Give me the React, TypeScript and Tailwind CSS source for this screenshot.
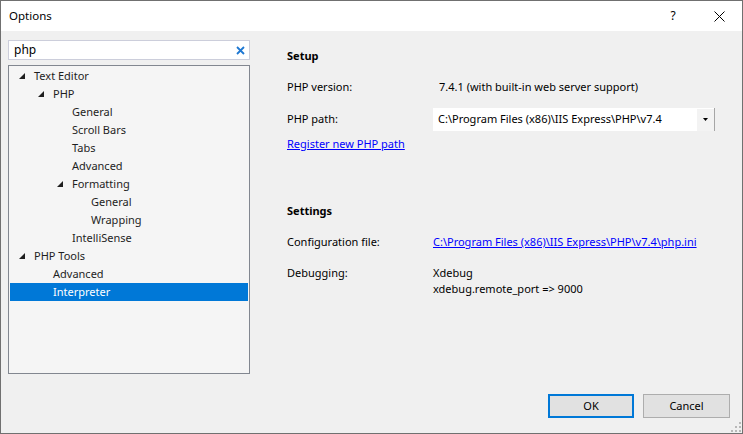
import React from 'react'

type Node = { label: string; level: number; open?: boolean; selected?: boolean }

const tree: Node[] = [
    { label: 'Text Editor', level: 0, open: true },
    { label: 'PHP', level: 1, open: true },
    { label: 'General', level: 2 },
    { label: 'Scroll Bars', level: 2 },
    { label: 'Tabs', level: 2 },
    { label: 'Advanced', level: 2 },
    { label: 'Formatting', level: 2, open: true },
    { label: 'General', level: 3 },
    { label: 'Wrapping', level: 3 },
    { label: 'IntelliSense', level: 2 },
    { label: 'PHP Tools', level: 0, open: true },
    { label: 'Advanced', level: 1 },
    { label: 'Interpreter', level: 1, selected: true },
]

const font = { fontFamily: '"Segoe UI", "Noto Sans", "Open Sans", sans-serif' }

function TreeRow({ node }: { node: Node }) {
    return (
        <div
            className={`flex items-center h-[18px] ${node.selected ? 'bg-[#0078d7] text-white' : 'text-[#1e1e1e]'}`}
            style={{ paddingLeft: node.level * 19 }}
        >
            <div className="w-[24px] h-[18px] flex items-center">
                {node.open && (
                    <svg width="6" height="6" viewBox="0 0 6 6" className="ml-[9px]">
                        <polygon points="6,0 6,6 0,6" fill="#1e1e1e" />
                    </svg>
                )}
            </div>
            <span className="leading-[18px]">{node.label}</span>
        </div>
    )
}

export default function App() {
    return (
        <div className="w-[743px] h-[434px] border border-[#707070] flex flex-col text-[11px] text-black overflow-hidden whitespace-nowrap" style={font}>
            {/* Title bar */}
            <div className="h-[30px] bg-white flex items-center">
                <span className="pl-[8px] flex-1 text-[11.5px]">Options</span>
                <div className="w-[46px] h-[30px] flex items-center justify-center text-[12px]">?</div>
                <div className="w-[46px] h-[30px] flex items-center justify-center">
                    <svg width="11" height="11" viewBox="0 0 11 11">
                        <path d="M0.5 0.5 L10.5 10.5 M10.5 0.5 L0.5 10.5" stroke="#000" strokeWidth="1" />
                    </svg>
                </div>
            </div>

            {/* Body */}
            <div className="flex-1 bg-[#f0f0f0] flex flex-col relative">
                <div className="flex flex-1">
                    {/* Left column */}
                    <div className="w-[242px] ml-[7px] mt-[9px] flex flex-col">
                        <div className="h-[20px] bg-white border border-[#cccedb] flex items-center pl-[5px] pr-[4px]">
                            <span className="flex-1 leading-[18px] text-[12px]">php</span>
                            <svg width="9" height="9" viewBox="0 0 9 9">
                                <path d="M1 1 L8 8 M8 1 L1 8" stroke="#1e78d2" strokeWidth="1.8" />
                            </svg>
                        </div>
                        <div className="mt-[5px] h-[309px] bg-[#f5f5f5] border border-[#828790] px-px pt-px">
                            {tree.map((n, i) => (
                                <TreeRow key={i} node={n} />
                            ))}
                        </div>
                    </div>

                    {/* Right column */}
                    <div className="ml-[37px] pt-[17px] flex-1 pr-[27px]">
                        <div className="font-bold leading-[16px]">Setup</div>

                        <div className="flex mt-[15px] leading-[16px]">
                            <span className="w-[146px]">PHP version:</span>
                            <span className="ml-[6px]">7.4.1 (with built-in web server support)</span>
                        </div>

                        <div className="flex items-center mt-[13px]">
                            <span className="w-[146px]">PHP path:</span>
                            <div className="flex-1 h-[23px] bg-white border-r border-[#a6a6a6] flex items-center">
                                <span className="flex-1 pl-[5px]">C:\Program Files (x86)\IIS Express\PHP\v7.4</span>
                                <div className="w-[17px] h-[22px] bg-[#f3f3f3] flex items-center justify-center">
                                    <svg width="5" height="3" viewBox="0 0 5 3">
                                        <polygon points="0,0 5,0 2.5,3" fill="#000" />
                                    </svg>
                                </div>
                            </div>
                        </div>

                        <div className="mt-[5px] leading-[16px]">
                            <span className="text-[#0000ff] underline">Register new PHP path</span>
                        </div>

                        <div className="font-bold leading-[16px] mt-[51px]">Settings</div>

                        <div className="flex mt-[15px] leading-[16px]">
                            <span className="w-[146px]">Configuration file:</span>
                            <span className="text-[#0000ff] underline">C:\Program Files (x86)\IIS Express\PHP\v7.4\php.ini</span>
                        </div>

                        <div className="flex mt-[15px] leading-[16px]">
                            <span className="w-[146px]">Debugging:</span>
                            <div className="flex flex-col">
                                <span>Xdebug</span>
                                <span>xdebug.remote_port =&gt; 9000</span>
                            </div>
                        </div>
                    </div>
                </div>

                {/* Footer */}
                <div className="flex justify-end gap-[9px] pr-[12px] pb-[15px] pt-[20px]">
                    <button className="w-[86px] h-[24px] bg-[#e1e1e1] border-2 border-[#0078d7] leading-[20px]">OK</button>
                    <button className="w-[87px] h-[24px] bg-[#e1e1e1] border border-[#adadad] leading-[22px]">Cancel</button>
                </div>

                {/* Resize grip */}
                <svg width="10" height="10" viewBox="0 0 10 10" className="absolute right-[1px] bottom-[1px]">
                    {[
                        [8, 0], [8, 4], [4, 4], [8, 8], [4, 8], [0, 8],
                    ].map(([x, y], i) => (
                        <rect key={i} x={x} y={y} width="2" height="2" fill="#b8b8b8" />
                    ))}
                </svg>
            </div>
        </div>
    )
}
